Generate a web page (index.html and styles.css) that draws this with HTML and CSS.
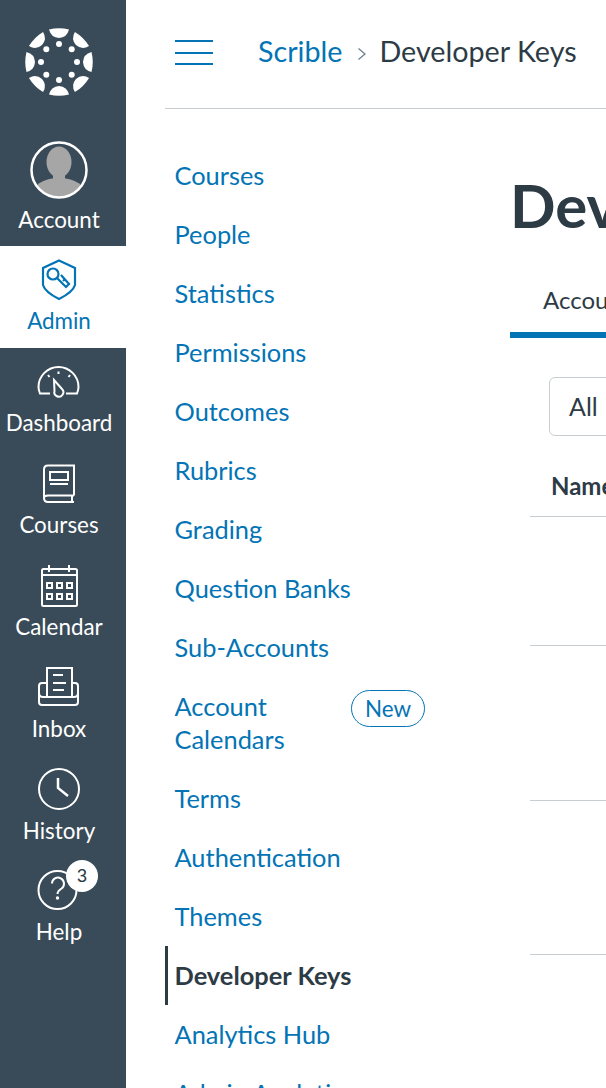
FILE: index.html
```html
<!DOCTYPE html>
<html lang="en">
<head>
  <meta charset="UTF-8" />
  <title>Developer Keys</title>
  <meta name="viewport" content="width=device-width, initial-scale=1.0" />
  <link rel="stylesheet" href="styles.css">
</head>
<body>
  <div class="app">
    <aside class="sidebar">
      <svg class="logo" viewBox="-34 -34 68 68" width="68" height="68" fill="#fff">
        <defs>
          <path id="wedge" d="M-10 -32.5 Q0 -35 10 -32.5 Q8 -24.5 0 -24 Q-8 -24.5 -10 -32.5Z" />
        </defs>
        <use href="#wedge" />
        <use href="#wedge" transform="rotate(45)" />
        <use href="#wedge" transform="rotate(90)" />
        <use href="#wedge" transform="rotate(135)" />
        <use href="#wedge" transform="rotate(180)" />
        <use href="#wedge" transform="rotate(225)" />
        <use href="#wedge" transform="rotate(270)" />
        <use href="#wedge" transform="rotate(315)" />
        <circle cx="0" cy="-18" r="3" />
        <circle cx="12.7" cy="-12.7" r="3" />
        <circle cx="18" cy="0" r="3" />
        <circle cx="12.7" cy="12.7" r="3" />
        <circle cx="0" cy="18" r="3" />
        <circle cx="-12.7" cy="12.7" r="3" />
        <circle cx="-18" cy="0" r="3" />
        <circle cx="-12.7" cy="-12.7" r="3" />
      </svg>

      <a class="account" href="#">
        <svg viewBox="0 0 58 58" width="58" height="58">
          <clipPath id="face"><circle cx="29" cy="29" r="27" /></clipPath>
          <g clip-path="url(#face)" fill="#a6a6a6">
            <ellipse cx="29" cy="21" rx="12.5" ry="15.5" />
            <rect x="23" y="30" width="12" height="12" />
            <ellipse cx="29" cy="55" rx="28" ry="18" />
          </g>
          <circle cx="29" cy="29" r="27.5" fill="none" stroke="#fff" stroke-width="2.5" />
        </svg>
        <span>Account</span>
      </a>

      <a class="nav-item active" href="#">
        <svg viewBox="0 0 84 50" width="84" height="50" fill="none" stroke="currentColor" stroke-width="2.2">
          <path d="M42 2.5 L58 10 V27 Q56 34 42 41 Q28 34 26 27 V10Z" />
          <circle cx="36" cy="16" r="5.5" />
          <path d="M40 20 L49 29 L52 26 L44 17 M46 23 L48 21" />
        </svg>
        <span>Admin</span>
      </a>

      <a class="nav-item" href="#">
        <svg viewBox="0 0 84 50" width="84" height="50" fill="none" stroke="currentColor" stroke-width="2">
          <path d="M33 33.5 H23 C22 31 21.5 29 21.5 27 A20 20 0 0 1 61.5 27 C61.5 29 61 31 60 33.5 H49" />
          <path d="M37 20 L45 29 A4.5 4.5 0 1 1 37.5 31Z" />
          <path d="M41.5 11.5 V14 M31 15 L32.5 17 M53 15 L51.5 17" />
        </svg>
        <span>Dashboard</span>
      </a>

      <a class="nav-item" href="#">
        <svg viewBox="0 0 84 50" width="84" height="50" fill="none" stroke="currentColor" stroke-width="2">
          <path d="M57 33.5 V3.5 H31 Q27 3.5 27 7.5 V36 Q27 40 31 40 H57" />
          <path d="M57 33.5 H31 Q27 33.5 27 36 M55 34 V40" />
          <rect x="33" y="10" width="18" height="8" />
          <path d="M33 22 H51" />
        </svg>
        <span>Courses</span>
      </a>

      <a class="nav-item" href="#">
        <svg viewBox="0 0 84 50" width="84" height="50" fill="none" stroke="currentColor" stroke-width="2">
          <rect x="25" y="5" width="35" height="37" rx="1.5" />
          <path d="M25 11 H60 M32 1 V8 M52 1 V8" />
          <path stroke-width="2" d="M30 19 h5 v5 h-5z M40 19 h5 v5 h-5z M50 19 h5 v5 h-5z M30 30 h5 v5 h-5z M40 30 h5 v5 h-5z M50 30 h5 v5 h-5z" />
        </svg>
        <span>Calendar</span>
      </a>

      <a class="nav-item" href="#">
        <svg viewBox="0 0 84 50" width="84" height="50" fill="none" stroke="currentColor" stroke-width="2">
          <path d="M30 31 V2 H55 V31" />
          <path d="M36 9 H46 M36 17 H49 M36 24 H47" />
          <path d="M30 17 H25 Q22 17 22 20 V36 Q22 39 25 39 H58 Q61 39 61 36 V20 Q61 17 58 17 H55" />
          <path d="M22 27 Q22 31 26 31 H57 Q61 31 61 27" />
        </svg>
        <span>Inbox</span>
      </a>

      <a class="nav-item" href="#">
        <svg viewBox="0 0 84 50" width="84" height="50" fill="none" stroke="currentColor" stroke-width="2">
          <circle cx="42" cy="21" r="20" />
          <path stroke-width="2.5" d="M41 10 V20 L51 28" />
        </svg>
        <span>History</span>
      </a>

      <a class="nav-item help" href="#">
        <svg viewBox="0 0 84 50" width="84" height="50" fill="none" stroke="currentColor" stroke-width="2">
          <circle cx="40.5" cy="20" r="19" />
          <path d="M35 13.5 A6 6 0 1 1 44.5 18.5 C41.5 20.5 40.5 21.5 40.5 24" />
          <circle cx="40.5" cy="28" r="1.7" fill="currentColor" stroke="none" />
        </svg>
        <span>Help</span>
        <b class="badge">3</b>
      </a>
    </aside>

    <div class="content">
      <header class="topbar">
        <button class="menu-btn" aria-label="Menu"><i></i><i></i><i></i></button>
        <nav class="crumbs">
          <a href="#">Scrible</a>
          <svg viewBox="0 0 10 14" width="10" height="14" fill="none" stroke="#73818c" stroke-width="1.3"><path d="M1.5 1.5 L8 7 L1.5 12.5" /></svg>
          <span>Developer Keys</span>
        </nav>
      </header>

      <div class="columns">
        <ul class="side-menu">
          <li><a href="#">Courses</a></li>
          <li><a href="#">People</a></li>
          <li><a href="#">Statistics</a></li>
          <li><a href="#">Permissions</a></li>
          <li><a href="#">Outcomes</a></li>
          <li><a href="#">Rubrics</a></li>
          <li><a href="#">Grading</a></li>
          <li><a href="#">Question Banks</a></li>
          <li><a href="#">Sub-Accounts</a></li>
          <li class="with-pill"><a href="#">Account Calendars</a><span class="pill">New</span></li>
          <li><a href="#">Terms</a></li>
          <li><a href="#">Authentication</a></li>
          <li><a href="#">Themes</a></li>
          <li class="current"><a href="#">Developer Keys</a></li>
          <li><a href="#">Analytics Hub</a></li>
          <li><a href="#">Admin Analytics</a></li>
        </ul>

        <main class="main">
          <h1>Developer Keys</h1>
          <div class="tabs"><span>Account</span></div>
          <div class="filter">All</div>
          <div class="table-head">Name</div>
          <div class="row row-1"></div>
          <div class="row row-2"></div>
          <div class="row row-3"></div>
        </main>
      </div>
    </div>
  </div>
</body>
</html>
```

FILE: styles.css
```css
* {
  box-sizing: border-box;
}

html,
body {
  height: 100%;
}

body {
  margin: 0;
  overflow: hidden;
  font-family: "Lato", sans-serif;
  background: #fff;
  color: #2D3B45;
}

a {
  color: #0374B5;
  text-decoration: none;
}

.app {
  display: flex;
  height: 1088px;
  overflow: hidden;
}

/* left rail */
.sidebar {
  flex: 0 0 126px;
  display: flex;
  flex-direction: column;
  align-items: stretch;
  padding-top: 28px;
  background: #394B58;
}

.logo {
  display: block;
  margin: 0 8px 45px 0;
  align-self: center;
}

.account {
  display: flex;
  flex-direction: column;
  align-items: center;
  height: 105px;
  padding-right: 8px;
  color: #fff;
  font-size: 22.4px;
  line-height: 27px;
}

.account span {
  margin-top: 7px;
}

.nav-item {
  position: relative;
  display: flex;
  flex-direction: column;
  align-items: center;
  height: 102px;
  padding: 12px 8px 0 0;
  color: #fff;
  font-size: 22.4px;
  line-height: 27px;
}

.nav-item svg {
  display: block;
  flex: none;
}

.nav-item span {
  margin-top: -1px;
}

.nav-item.help span {
  margin-top: -2px;
}

.nav-item.active {
  background: #fff;
  color: #0374B5;
}

.badge {
  position: absolute;
  left: 66px;
  top: 2px;
  width: 32px;
  height: 32px;
  border-radius: 50%;
  background: #fff;
  color: #2D3B45;
  font-family: "Liberation Sans", sans-serif;
  font-weight: 400;
  font-size: 18px;
  line-height: 32px;
  text-align: center;
}

/* top bar + columns */
.content {
  flex: 1;
  min-width: 0;
}

.topbar {
  display: flex;
  align-items: center;
  height: 109px;
  margin-left: 39px;
  padding-left: 10px;
  border-bottom: 1px solid #C7CDD1;
}

.menu-btn {
  display: flex;
  flex-direction: column;
  gap: 9.5px;
  width: 38px;
  margin: 0 45px 3px 0;
  padding: 0;
  border: none;
  background: none;
}

.menu-btn i {
  display: block;
  height: 2px;
  background: #0374B5;
}

.crumbs {
  display: flex;
  align-items: center;
  font-size: 28.7px;
  line-height: 33px;
  margin-bottom: 5px;
  white-space: nowrap;
}

.crumbs svg {
  margin: 4px 13px 0 14px;
}

.columns {
  display: flex;
}

.side-menu {
  flex: 0 0 345px;
  margin: 0 0 0 39px;
  padding: 37.4px 0 0;
  list-style: none;
  font-size: 25.4px;
  line-height: 33px;
}

.side-menu li {
  width: 260px;
  padding: 13px 0 13px 9.5px;
}

.with-pill {
  display: flex;
  justify-content: space-between;
  align-items: flex-start;
}

.with-pill a {
  max-width: 150px;
}

.pill {
  width: 74px;
  height: 37px;
  border: 1px solid #0374B5;
  border-radius: 19px;
  color: #0374B5;
  font-size: 22.4px;
  line-height: 35px;
  text-align: center;
}

.side-menu .current {
  padding-left: 6.5px;
  border-left: 3px solid #2D3B45;
}

.current a {
  color: #2D3B45;
  font-weight: 700;
}

/* main column, clipped by the window */
.main {
  flex: none;
  width: 96px;
  white-space: nowrap;
}

h1 {
  margin: 0;
  padding: 60px 0 0;
  font-size: 60px;
  font-weight: 700;
  line-height: 72px;
}

.tabs {
  height: 73px;
  margin-top: 24px;
  padding: 0 0 0 33px;
  border-bottom: 6px solid #0374B5;
  font-size: 24px;
  line-height: 70px;
}

.filter {
  width: 120px;
  height: 59px;
  margin: 39px 0 0 39px;
  padding-left: 19px;
  border: 1px solid #C7CDD1;
  border-radius: 6px;
  font-size: 25px;
  line-height: 57px;
}

.table-head {
  height: 81px;
  margin-left: 20px;
  padding: 33px 0 0 21px;
  border-bottom: 1px solid #C7CDD1;
  font-size: 24px;
  font-weight: 700;
  line-height: 34px;
}

.row {
  margin-left: 20px;
  border-bottom: 1px solid #C7CDD1;
}

.row-1 {
  height: 129px;
}

.row-2 {
  height: 155px;
}

.row-3 {
  height: 154px;
}
```
